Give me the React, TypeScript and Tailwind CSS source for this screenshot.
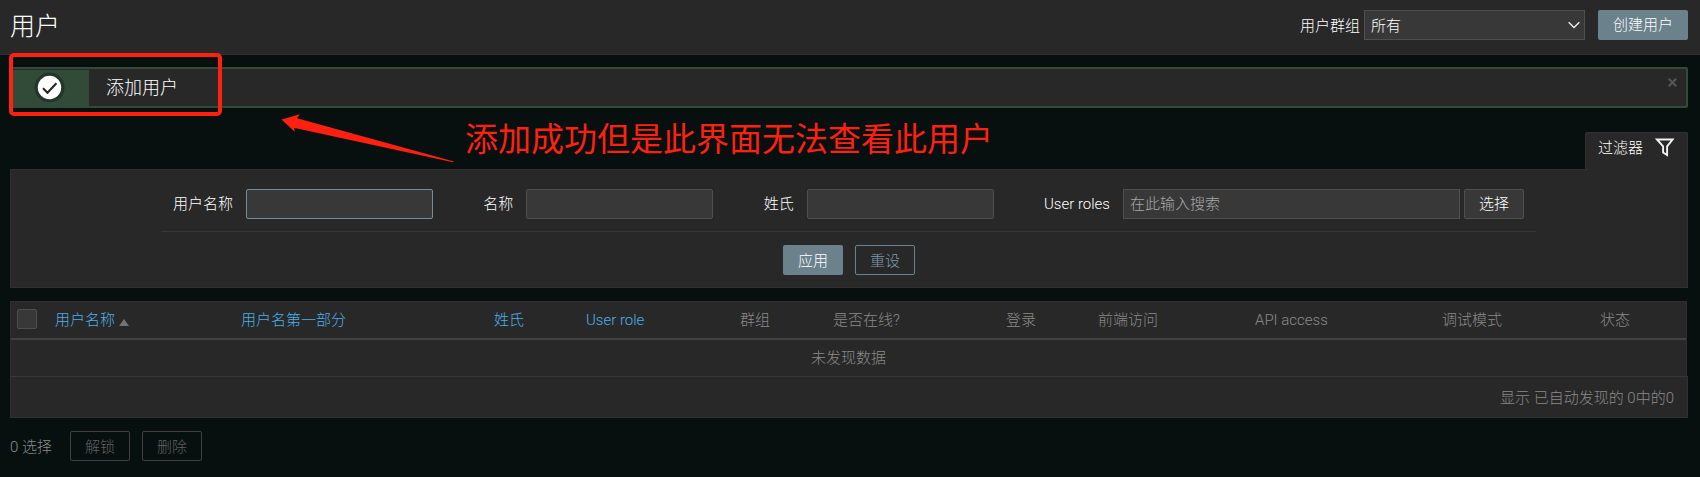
import React from "react";

const columns = [
  { label: "用户名第一部分", width: "w-[253px]", link: true },
  { label: "姓氏", width: "w-[92px]", link: true },
  { label: "User role", width: "w-[154px]", link: true },
  { label: "群组", width: "w-[93px]", link: false },
  { label: "是否在线?", width: "w-[173px]", link: false },
  { label: "登录", width: "w-[92px]", link: false },
  { label: "前端访问", width: "w-[157px]", link: false },
  { label: "API access", width: "w-[187px]", link: false },
  { label: "调试模式", width: "w-[158px]", link: false },
  { label: "状态", width: "w-[80px]", link: false },
];

function Field({ label, focused = false }: { label: string; focused?: boolean }) {
  return (
    <label className="flex items-center">
      <span className="mr-[13px] whitespace-nowrap">{label}</span>
      <input
        className={
          focused
            ? "h-[30px] w-[187px] rounded-[2px] border border-[#768d99] bg-[#383838] px-1.5 outline-none"
            : "h-[30px] w-[187px] rounded-[2px] border border-[#4f4f4f] bg-[#383838] px-1.5 outline-none"
        }
      />
    </label>
  );
}

function Header() {
  return (
    <header className="flex h-[55px] items-start justify-between border-b border-[#303030] bg-[#282828] pt-2.5 pr-3 pl-2.5">
      <h1 className="text-[25px] leading-[34px] text-white">用户</h1>
      <div className="flex h-[30px] items-center">
        <span className="mt-px mr-[4px]">用户群组</span>
        <div className="flex h-[30px] w-[221px] items-center justify-between border border-[#4f4f4f] bg-[#383838] pr-1 pl-[6px]">
          <span className="mt-px">所有</span>
          <svg className="mb-px h-2 w-3" viewBox="0 0 12 8" fill="none" stroke="#f2f2f2" strokeWidth="1.3">
            <path d="M0.7 1.2 6 6.5 11.3 1.2" />
          </svg>
        </div>
        <button className="ml-[13px] h-[30px] w-[90px] rounded-[2px] bg-[#6b818c] pb-px">创建用户</button>
      </div>
    </header>
  );
}

function Message() {
  return (
    <div className="mt-3 flex h-[41px] justify-between rounded-[2px] border-2 border-[#324b39] bg-[#282828]">
      <div className="flex items-center">
        <div className="mt-px flex h-9 w-[77px] items-center bg-[#324b39] pb-px pl-[22px]">
          <svg className="size-[31px]" viewBox="0 0 31 31">
            <circle cx="15.5" cy="15.5" r="15" fill="#23362a" />
            <circle cx="15.5" cy="15.5" r="11.7" fill="#fff" />
            <path d="M9 16.2 13.5 20.8 22.4 11.2" fill="none" stroke="#1f2421" strokeWidth="2" />
          </svg>
        </div>
        <span className="mt-px ml-[17px] text-[18px]">添加用户</span>
      </div>
      <svg className="mt-[9px] mr-[9px] size-[9px]" viewBox="0 0 9 9" stroke="#555" strokeWidth="2.2">
        <path d="M0.8 0.8 8.2 8.2M8.2 0.8 0.8 8.2" />
      </svg>
    </div>
  );
}

function Filter() {
  return (
    <section className="mt-6">
      <div className="flex justify-end">
        <div className="relative z-10 mb-[-1px] flex h-[38px] w-[103px] items-start rounded-t-[2px] border border-b-0 border-[#303030] bg-[#282828] pl-3">
          <span className="mt-[4px] leading-[22px]">过滤器</span>
          <svg className="mt-[5px] ml-[12px] h-[19px] w-[20px]" viewBox="0 0 20 19" fill="none" stroke="#f2f2f2" strokeWidth="1.9">
            <path d="M2 1.5H17.6L12.1 8.3V17L8.1 14.5V8.3Z" />
          </svg>
        </div>
      </div>
      <div className="flex h-[119px] flex-col border border-[#303030] bg-[#282828] pt-[19px] pl-[150px]">
        <div className="flex h-[43px] w-[1375px] items-start justify-between border-b border-[#383838] pr-3 pl-3">
          <Field label="用户名称" focused />
          <Field label="名称" />
          <Field label="姓氏" />
          <div className="flex items-center">
            <span className="mr-[13px]">User roles</span>
            <div className="flex h-[30px] w-[337px] items-center border border-[#4f4f4f] bg-[#383838] pl-1.5 text-[#a8a8a8]">
              在此输入搜索
            </div>
            <button className="ml-1 h-[30px] w-[60px] rounded-[2px] border border-[#4f4f4f] bg-[#383838]">选择</button>
          </div>
        </div>
        <div className="mt-[13px] flex gap-3 pl-[622px]">
          <button className="h-[30px] w-[60px] rounded-[2px] bg-[#6b818c] pt-px">应用</button>
          <button className="h-[30px] w-[60px] rounded-[2px] border border-[#6b818c] pt-px text-[#7e9bab]">重设</button>
        </div>
      </div>
    </section>
  );
}

function Table() {
  return (
    <section className="mt-[13px] text-[#8a8a8a]">
      <div className="mr-px border border-b-0 border-[#303030] bg-[#282828]">
        <div className="flex h-[38px] items-center border-b-2 border-[#424242] pl-1.5">
          <span className="mt-[-3px] mr-[18px] size-5 rounded-[2px] border border-[#4f4f4f] bg-[#383838]" />
          <div className="flex w-[186px] items-center text-[#4eb0ea]">
            用户名称
            <svg className="mt-1 ml-1 h-[7px] w-2.5" viewBox="0 0 10 7" fill="#737373">
              <path d="M5 0 10 7H0Z" />
            </svg>
          </div>
          {columns.map((column) => (
            <div key={column.label} className={column.link ? `${column.width} shrink-0 text-[#4eb0ea]` : `${column.width} shrink-0`}>
              {column.label}
            </div>
          ))}
        </div>
        <div className="flex h-9 items-center justify-center">未发现数据</div>
      </div>
      <div className="flex h-[42px] items-center justify-end border border-[#303030] border-t-[#383838] bg-[#282828] pt-0.5 pr-[13px]">
        显示 已自动发现的 0中的0
      </div>
    </section>
  );
}

export default function App() {
  return (
    <div className="relative h-[477px] w-[1700px] overflow-hidden bg-[#08100f] font-['Roboto','Noto_Sans_CJK_SC',sans-serif] text-[15px] leading-[22px] font-light text-white">
      <Header />
      <main className="pr-3 pl-2.5">
        <Message />
        <Filter />
        <Table />
        <div className="mt-[13px] flex items-center text-[#8a8a8a]">
          <span className="w-[60px] pt-px">0 选择</span>
          <button className="h-[30px] w-[60px] rounded-[2px] border border-[#404040] pt-px text-[#606060]">解锁</button>
          <button className="ml-3 h-[30px] w-[60px] rounded-[2px] border border-[#404040] pt-px text-[#606060]">删除</button>
        </div>
      </main>
      <div className="absolute top-[53px] left-[9px] z-20 h-[63px] w-[213px] rounded-[5px] border-4 border-[#ff2010]" />
      <svg className="absolute top-[110px] left-[278px] z-20 h-[56px] w-[180px]" viewBox="278 110 180 56" fill="#ff2010">
        <path d="M281.5 119.5 300 114.2 297 118.3 454 161.4 453 162.3 293.7 127.8 295 132Z" />
      </svg>
      <div className="absolute top-[118px] left-[465px] z-20 text-[33px] leading-[44px] font-normal whitespace-nowrap text-[#ff2010]">
        添加成功但是此界面无法查看此用户
      </div>
    </div>
  );
}
